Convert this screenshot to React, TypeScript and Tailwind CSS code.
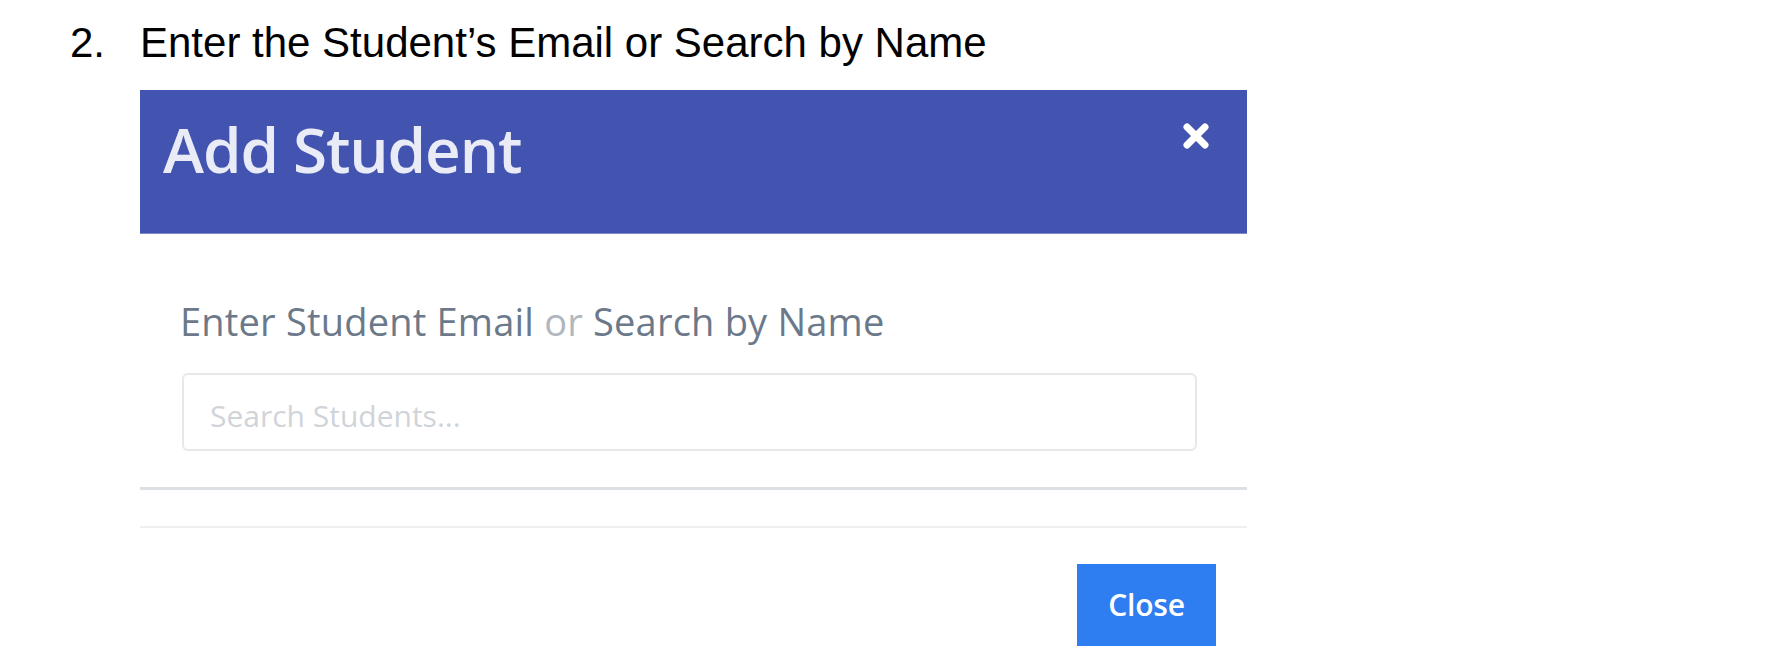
import React from "react";

export default function App() {
  return (
    <div className="w-[1786px] h-[666px] bg-white overflow-hidden">
      {/* Heading */}
      <div
        className="flex pt-[22px] text-[42px] leading-none text-black"
        style={{ fontFamily: '"Liberation Sans", Arial, sans-serif' }}
      >
        <span className="w-[140px] pl-[70px]">2.</span>
        <span>Enter the Student’s Email or Search by Name</span>
      </div>

      {/* Modal */}
      <div
        className="ml-[140px] mt-[26px] w-[1107px]"
        style={{ fontFamily: '"Open Sans", "Noto Sans", sans-serif' }}
      >
        {/* Header */}
        <div className="flex h-[144px] items-start justify-between bg-[#4254b0] border-b border-[#7c89c8]">
          <div className="pl-[23px] pt-[28px] text-[62px] font-semibold leading-none tracking-[-1.1px] text-[#e9ebf6]">
            Add Student
          </div>
          <svg
            className="mr-[37px] mt-[32px]"
            width="28"
            height="28"
            viewBox="0 0 28 28"
          >
            <path
              d="M5 5 L23 23 M23 5 L5 23"
              stroke="#ffffff"
              strokeWidth="7"
              strokeLinecap="round"
              fill="none"
            />
          </svg>
        </div>

        {/* Body */}
        <div className="pl-[42px] pr-[50px] pt-[68px] pb-[36px]">
          <div className="-ml-[2px] text-[38px] leading-none text-[#6b798a] tracking-[0.2px]">
            Enter Student Email <span className="text-[#b1b7be]">or</span> Search by Name
          </div>
          <input
            type="text"
            placeholder="Search Students..."
            className="mt-[33px] block h-[78px] w-[1015px] rounded-[6px] border-2 border-[#e6e9ec] bg-white pl-[26px] pt-[6px] text-[30px] text-[#555] outline-none placeholder:text-[#d0d4d9]"
            style={{ fontFamily: '"Open Sans", "Noto Sans", sans-serif' }}
          />
        </div>

        <div className="h-[3px] bg-[#dcdfe3]" />
        <div className="h-[36px]" />
        <div className="h-[2px] bg-[#efefef]" />

        {/* Footer */}
        <div className="flex justify-end pt-[36px] pr-[31px]">
          <button className="flex h-[82px] w-[139px] items-center justify-center bg-[#2e7ef2] text-[30px] font-semibold leading-none text-white tracking-[-0.2px]">
            Close
          </button>
        </div>
      </div>
    </div>
  );
}
